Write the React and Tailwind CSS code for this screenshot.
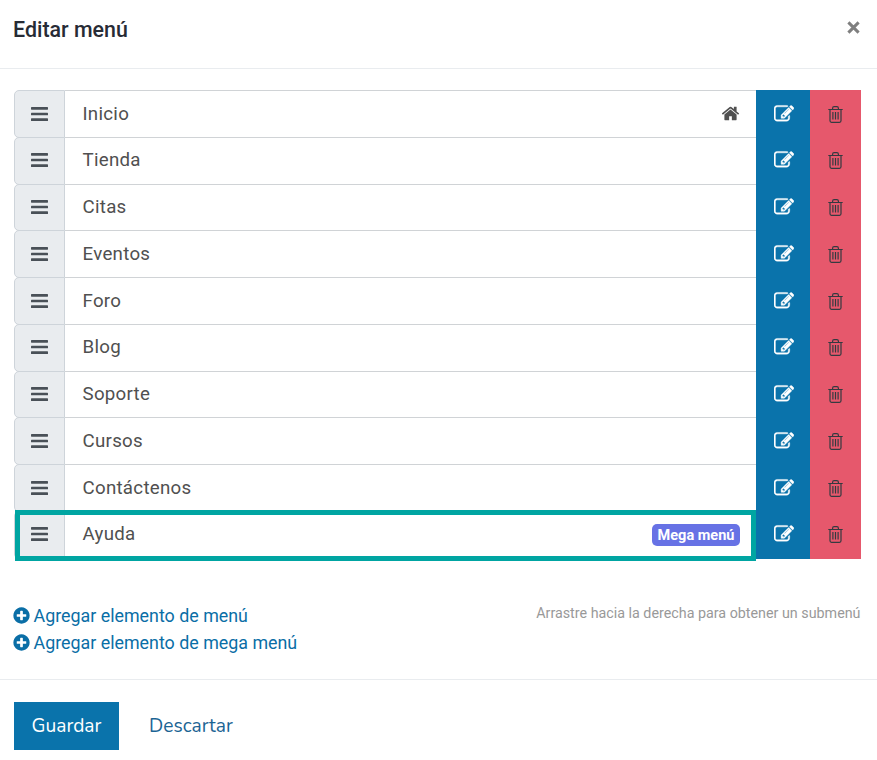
const items = [
  { label: 'Inicio', home: true },
  { label: 'Tienda' },
  { label: 'Citas' },
  { label: 'Eventos' },
  { label: 'Foro' },
  { label: 'Blog' },
  { label: 'Soporte' },
  { label: 'Cursos' },
  { label: 'Contáctenos' },
  { label: 'Ayuda', mega: true },
];

function BarsIcon() {
  return (
    <svg className="-mt-[0.5px]" width="17" height="14" viewBox="0 0 17 14" fill="currentColor" aria-hidden="true">
      <rect y="0" width="17" height="2.7" rx="0.6" />
      <rect y="5.65" width="17" height="2.7" rx="0.6" />
      <rect y="11.3" width="17" height="2.7" rx="0.6" />
    </svg>
  );
}

function HomeIcon() {
  return (
    <svg width="19" height="19" viewBox="0 0 1792 1792" fill="currentColor" aria-hidden="true">
      <path d="M1472 992v480q0 26-19 45t-45 19h-384v-384h-256v384h-384q-26 0-45-19t-19-45v-480q0-1 .5-3t.5-3l575-474 575 474q1 2 1 6zm223-69l-62 74q-8 9-21 11h-3q-13 0-21-7l-692-577-692 577q-12 8-24 7-13-2-21-11l-62-74q-8-10-7-23.5t11-21.5l719-599q32-26 76-26t76 26l244 204v-195q0-14 9-23t23-9h192q14 0 23 9t9 23v408l219 182q10 8 11 21.5t-7 23.5z" />
    </svg>
  );
}

function EditIcon() {
  return (
    <svg className="-mt-[0.5px] ml-px" width="20" height="20" viewBox="0 0 1792 1792" fill="currentColor" stroke="currentColor" strokeWidth="36" aria-hidden="true">
      <path d="M888 1184l116-116-152-152-116 116v56h96v96h56zm440-720q-16-16-33 1l-350 350q-17 17-1 33t33-1l350-350q17-17 1-33zm80 594v190q0 119-84.5 203.5t-203.5 84.5h-832q-119 0-203.5-84.5t-84.5-203.5v-832q0-119 84.5-203.5t203.5-84.5h832q63 0 117 25 15 7 18 23 3 17-9 29l-49 49q-14 14-32 8-23-6-45-6h-832q-66 0-113 47t-47 113v832q0 66 47 113t113 47h832q66 0 113-47t47-113v-126q0-13 9-22l64-64q15-15 35-7t20 29zm-96-738l288 288-672 672h-288v-288zm444 132l-92 92-288-288 92-92q28-28 68-28t68 28l152 152q28 28 28 68t-28 68z" />
    </svg>
  );
}

function TrashIcon() {
  return (
    <svg className="mt-[0.5px]" width="15" height="17" viewBox="0 0 15 17" fill="none" stroke="currentColor" strokeWidth="1.2" aria-hidden="true">
      <path d="M0.3 3.5h14.4M4.6 3.3V2.2q0-1.5 1.5-1.5h2.8q1.5 0 1.5 1.5v1.1M2 3.8v11q0 1.5 1.5 1.5h8q1.5 0 1.5-1.5v-11M4.9 6v7.5M7.5 6v7.5M10.1 6v7.5" />
    </svg>
  );
}

function PlusCircleIcon() {
  return (
    <svg width="19" height="19" viewBox="0 0 1792 1792" fill="currentColor" aria-hidden="true">
      <path d="M1344 960v-128q0-26-19-45t-45-19h-256v-256q0-26-19-45t-45-19h-128q-26 0-45 19t-19 45v256h-256q-26 0-45 19t-19 45v128q0 26 19 45t45 19h256v256q0 26 19 45t45 19h128q26 0 45-19t19-45v-256h256q26 0 45-19t19-45zm320-64q0 209-103 385.5t-279.5 279.5-385.5 103-385.5-103-279.5-279.5-103-385.5 103-385.5 279.5-279.5 385.5-103 385.5 103 279.5 279.5 103 385.5z" />
    </svg>
  );
}

function MenuRow({ item }) {
  return (
    <li className="relative -mb-px flex h-[47.75px]">
      <div className="flex w-[51px] items-center justify-center rounded-l-[5px] border border-[#ced4da] bg-[#e9ecef] text-[#495057]">
        <BarsIcon />
      </div>
      <div className="flex flex-1 items-center justify-between border-y border-[#d0d3d6] pr-4 pl-[17.5px]">
        <span className="-mt-[0.5px] text-[18.7px] leading-6 tracking-[0.28px] text-[#505050]">{item.label}</span>
        {item.home && <span className="text-[#505050]"><HomeIcon /></span>}
        {item.mega && (
          <span className="mt-[1px] flex h-[22px] w-[88px] items-center justify-center rounded-[5px] bg-[#6772e5] pt-px text-[14.5px] font-bold text-white">
            Mega menú
          </span>
        )}
      </div>
      <button className="flex w-[54px] items-center justify-center bg-[#0a73ab] text-white"><EditIcon /></button>
      <button className="flex w-[51px] items-center justify-center bg-[#e6586c] text-[#343a40]"><TrashIcon /></button>
      {item.mega && <div className="absolute top-[-1px] left-[1px] h-[51px] w-[741px] border-[5px] border-[#00a5a2]" />}
    </li>
  );
}

export default function App() {
  return (
    <div className="flex h-[760px] w-[877px] flex-col bg-white font-['Roboto',sans-serif]">
      <header className="flex h-[69px] items-start justify-between border-b border-[#e9ecef] pr-[17px] pl-[13px]">
        <h1 className="mt-[15px] text-[21.4px] leading-[30px] font-medium text-[#272b35]">Editar menú</h1>
        <button className="mt-[21px] text-[#7f7f7f]">
          <svg width="13" height="13" viewBox="0 0 13 13" stroke="currentColor" strokeWidth="3" aria-hidden="true">
            <path d="M1.4 1.4l10.2 10.2M11.6 1.4L1.4 11.6" />
          </svg>
        </button>
      </header>
      <main className="flex h-[611px] flex-col border-b border-[#e9ecef] px-[14px] pt-[21px]">
        <ul className="w-[847px]">
          {items.map((item) => <MenuRow key={item.label} item={item} />)}
        </ul>
        <div className="mt-[45px] flex w-[846.5px] items-start justify-between">
          <div className="-mt-px flex flex-col text-[17.85px] leading-[27px] text-[#0a6ea6]">
            <a className="flex items-center gap-[2.5px]"><span className="-ml-[2px]"><PlusCircleIcon /></span>Agregar elemento de menú</a>
            <a className="flex items-center gap-[2.5px]"><span className="-ml-[2px]"><PlusCircleIcon /></span>Agregar elemento de mega menú</a>
          </div>
          <p className="text-[14.3px] leading-[21px] text-[#999999]">Arrastre hacia la derecha para obtener un submenú</p>
        </div>
      </main>
      <footer className="flex gap-[30px] px-[14px] pt-[22px] font-['Nunito','Noto_Sans',sans-serif] text-[19.2px]">
        <button className="h-12 w-[105px] bg-[#0a73ab] text-white">Guardar</button>
        <button className="h-12 text-[#1b6494]">Descartar</button>
      </footer>
    </div>
  );
}
